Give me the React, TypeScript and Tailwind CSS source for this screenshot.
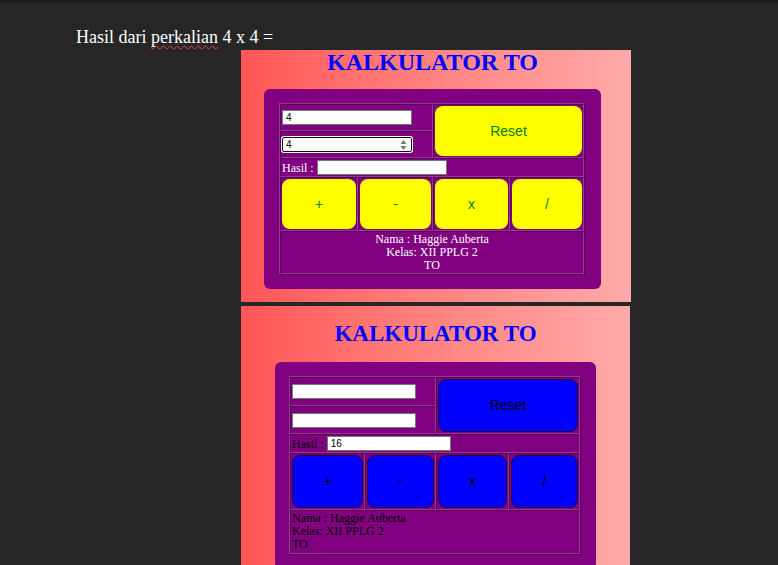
import { useState } from "react";

type Theme = {
  id: string;
  panel: string;
  heading: string;
  box: string;
  grid: string;
  button: string;
  field: string;
  text: string;
  credits: string;
};

type CalculatorProps = {
  theme: Theme;
  first: string;
  second: string;
  result: string;
  active?: boolean;
};

const cell =
  "border border-t-[#5a005a] border-l-[#5a005a] border-r-[#8c408c] border-b-[#8c408c] p-px";

const yellowTheme: Theme = {
  id: "yellow",
  panel: "mr-[147px] shrink-0 pl-[23px] pr-[30px] pb-[13px]",
  heading: "text-[24px] leading-6 mb-[15px]",
  box: "pl-[15px] pr-4 pt-[14px] pb-[14px]",
  grid: "grid-cols-[78fr_75fr_77fr_74fr] grid-rows-[27px_27px_19px_54px_43px]",
  button: "bg-[#ffff00] text-[#008000]",
  field: "w-[130px]",
  text: "text-white text-[12px]",
  credits: "text-center",
};

const blueTheme: Theme = {
  id: "blue",
  panel: "mr-[148px] flex-1 min-h-0 overflow-hidden px-[34px] pt-4",
  heading: "text-[23px] leading-6 mb-4",
  box: "pl-[14px] pr-[15px] pt-[14px] pb-[14px]",
  grid: "grid-cols-[75fr_71fr_73fr_71fr] grid-rows-[29px_28px_19px_57px_44px]",
  button: "bg-[#0000ff] text-black border border-[#24003c]",
  field: "w-[124px]",
  text: "text-black text-[12px]",
  credits: "text-left",
};

function Spinner() {
  return (
    <svg
      className="pointer-events-none absolute top-[3px] right-[5px]"
      width="7"
      height="10"
      viewBox="0 0 7 10"
      fill="#777"
      aria-hidden="true"
    >
      <path d="M3.5 0 6.5 4h-6zM3.5 10 .5 6h6z" />
    </svg>
  );
}

function Calculator({ theme, first, second, result, active }: CalculatorProps) {
  const [a, setA] = useState(first);
  const [b, setB] = useState(second);
  const [total, setTotal] = useState(result);

  const calculate = (op: string) => {
    const x = Number(a);
    const y = Number(b);
    const value = op === "+" ? x + y : op === "-" ? x - y : op === "x" ? x * y : x / y;
    setTotal(String(value));
  };

  const reset = () => {
    setA("");
    setB("");
    setTotal("");
  };

  const field = `block h-[15px] bg-white px-[3px] text-[10px] leading-[13px] text-black outline-none font-['Liberation_Sans',Arial,sans-serif] ${theme.field}`;
  const button = `h-full w-full rounded-lg font-['Liberation_Sans',Arial,sans-serif] ${theme.button}`;

  return (
    <section
      className={`ml-[241px] bg-linear-to-r from-[#ff5555] to-[#ffaaaa] ${theme.panel}`}
    >
      <h1 className={`text-center font-bold text-[#0000ff] ${theme.heading}`}>KALKULATOR TO</h1>
      <div className={`rounded-md bg-[#800080] ${theme.box}`}>
        <div
          className={`grid border border-t-[#8c408c] border-l-[#8c408c] border-r-[#5a005a] border-b-[#5a005a] ${theme.grid} ${theme.text}`}
        >
          <div className={`col-span-2 flex items-center ${cell}`}>
            <input
              className={`${field} border border-[#767676]`}
              aria-label="Angka pertama"
              inputMode="numeric"
              value={a}
              onChange={(e) => setA(e.target.value)}
            />
          </div>
          <div className={`col-span-2 row-span-2 ${cell}`}>
            <button type="button" className={`${button} text-[14px]`} onClick={reset}>
              Reset
            </button>
          </div>
          <div className={`col-span-2 flex items-center ${cell}`}>
            <div className="relative">
              <input
                className={`${field} border ${active ? "rounded-xs border-[#101010] ring-1 ring-white" : "border-[#767676]"}`}
                aria-label="Angka kedua"
                inputMode="numeric"
                value={b}
                onChange={(e) => setB(e.target.value)}
              />
              {active && <Spinner />}
            </div>
          </div>
          <div className={`col-span-4 flex items-center gap-[3px] ${cell}`}>
            <label htmlFor={`${theme.id}-result`}>Hasil :</label>
            <input
              id={`${theme.id}-result`}
              className={`${field} border border-[#767676]`}
              value={total}
              readOnly
            />
          </div>
          {["+", "-", "x", "/"].map((op) => (
            <div key={op} className={cell}>
              <button
                type="button"
                className={`${button} text-[14px]`}
                onClick={() => calculate(op)}
              >
                {op}
              </button>
            </div>
          ))}
          <div className={`col-span-4 leading-[13px] ${cell} ${theme.credits}`}>
            <p>Nama : Haggie Auberta</p>
            <p>Kelas: XII PPLG 2</p>
            <p>TO</p>
          </div>
        </div>
      </div>
    </section>
  );
}

export default function App() {
  return (
    <main className="flex h-screen flex-col overflow-hidden bg-[#262626] font-['Liberation_Serif','Times_New_Roman',serif]">
      <div className="h-1 shrink-0 bg-linear-to-b from-[#161616] to-[#262626]" />
      <p className="mt-[23px] mb-[3px] ml-[76px] shrink-0 text-[18px] leading-5 text-white">
        Hasil dari{" "}
        <span className="underline decoration-[#e04848] decoration-wavy decoration-1 underline-offset-2 [text-decoration-skip-ink:none]">
          perkalian
        </span>{" "}
        4 x 4 =
      </p>
      <Calculator theme={yellowTheme} first="4" second="4" result="" active />
      <div className="h-1 shrink-0" />
      <Calculator theme={blueTheme} first="" second="" result="16" />
    </main>
  );
}
